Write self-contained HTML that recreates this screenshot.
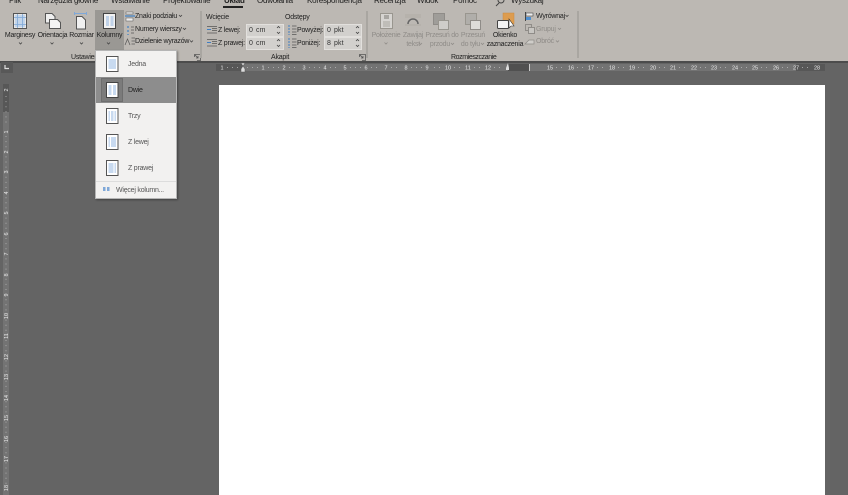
<!DOCTYPE html>
<html lang="pl"><head><meta charset="utf-8"><style>
html,body{margin:0;padding:0;background:#646464;width:848px;height:495px;overflow:hidden}
#r{position:relative;width:848px;height:495px;overflow:hidden;background:#646464;font-family:"Liberation Sans",sans-serif;font-size:7px;letter-spacing:-.22px;color:#222;filter:blur(.25px)}
#r div{position:absolute;white-space:nowrap}
.t{line-height:10px}
.c{text-align:center}
.g{color:#8f8c88}
svg{position:absolute;overflow:visible}
.sp{background:#d2d0cd;border:1px solid #e2e0dd;box-sizing:border-box;height:13px;line-height:11px;padding-left:2px;color:#333;letter-spacing:.1px;word-spacing:1px}
.ch{fill:none;stroke:#444;stroke-width:.8}
.chg{fill:none;stroke:#8f8c88;stroke-width:.8}
.ln{stroke:#6f9fd8;stroke-width:.85}
</style></head><body><div id="r">
<div style="left:0;top:0;width:848px;height:62px;background:#bcb8b3"></div>
<div style="left:0;top:61px;width:848px;height:2px;background:#4c4c4c"></div>

<!-- tabs -->
<div class="t" style="left:9px;top:-4px;font-size:8px">Plik</div>
<div class="t" style="left:38px;top:-4px;font-size:8px">Narzędzia główne</div>
<div class="t" style="left:111px;top:-4px;font-size:8px">Wstawianie</div>
<div class="t" style="left:163px;top:-4px;font-size:8px">Projektowanie</div>
<div class="t" style="left:224px;top:-4px;font-size:8px;font-weight:bold;color:#222">Układ</div>
<div style="left:223px;top:6px;width:20px;height:2px;background:#222"></div>
<div class="t" style="left:257px;top:-4px;font-size:8px">Odwołania</div>
<div class="t" style="left:307px;top:-4px;font-size:8px">Korespondencja</div>
<div class="t" style="left:374px;top:-4px;font-size:8px">Recenzja</div>
<div class="t" style="left:417px;top:-4px;font-size:8px">Widok</div>
<div class="t" style="left:453px;top:-4px;font-size:8px">Pomoc</div>
<svg style="left:495px;top:0" width="12" height="7"><circle cx="6" cy="0" r="3" fill="none" stroke="#444"/><path d="M4 3L1 6" stroke="#444"/></svg>
<div class="t" style="left:511px;top:-4px;font-size:8px">Wyszukaj</div>

<!-- Kolumny hover -->
<div style="left:95px;top:10px;width:29px;height:40px;background:#9a9894"></div>

<!-- big icons -->
<svg style="left:13px;top:13px" width="15" height="16"><rect x=".5" y=".5" width="13" height="15" fill="#e8e8e8" stroke="#555"/><rect x="2" y="2" width="10" height="12" fill="#c3d5ea"/><path d="M4.500 1V15M9.500 1V15M1 4.500H13M1 11.500H13" stroke="#7fa8d8" fill="none" stroke-width=".8"/></svg>
<svg style="left:45px;top:13px" width="17" height="17"><path d="M.5 .5H7L10 3.500V10H.5Z" fill="#efefef" stroke="#555"/><path d="M4.500 6.500H12.500L15.500 9.500V15.500H4.500Z" fill="#f4f4f4" stroke="#555"/></svg>
<svg style="left:74px;top:12px" width="14" height="18"><path d="M0 1.500H13M.5 0V3M12.500 0V3" stroke="#7fa8d8" fill="none"/><path d="M2.500 4.500H8L11.500 8V17H2.500Z" fill="#f0f0f0" stroke="#555"/></svg>
<svg style="left:103px;top:13px" width="14" height="17"><rect x=".5" y=".5" width="12" height="15" fill="#f2f2f2" stroke="#444"/><path class="ln" d="M3 4H6M3 6H6M3 8H6M3 10H6M3 12H6M7.500 4H10.500M7.500 6H10.500M7.500 8H10.500M7.500 10H10.500M7.500 12H10.500"/></svg>

<div class="t c" style="left:2px;top:31px;width:36px">Marginesy</div>
<div class="t c" style="left:36px;top:31px;width:33px">Orientacja</div>
<div class="t c" style="left:68px;top:31px;width:27px">Rozmiar</div>
<div class="t c" style="left:94px;top:31px;width:31px">Kolumny</div>
<svg style="left:0;top:0" width="848" height="62"><path class="ch" d="M19 42.500L20.500 44L22 42.500M50.500 42.500L52 44L53.500 42.500M80 42.500L81.500 44L83 42.500M107 42.500L108.500 44L110 42.500"/><path class="chg" d="M384.500 42.500L386 44L387.500 42.500"/>
<path class="ch" d="M179 15L180.500 16.500L182 15M183 28L184.500 29.500L186 28M190 40.500L191.500 42L193 40.500M565.500 15L567 16.500L568.500 15"/>
<path class="chg" d="M419 43L420.500 44.500L422 43M451 43L452.500 44.500L454 43M481 43L482.500 44.500L484 43M558 28L559.500 29.500L561 28M556 40.500L557.500 42L559 40.500"/></svg>

<!-- small commands -->
<svg style="left:125px;top:12px" width="10" height="9"><rect x="1" y="0" width="7" height="2" fill="#eee" stroke="#555" stroke-width=".5"/><path d="M0 4H10" stroke="#3f7fc4" stroke-width="1.200"/><rect x="1" y="6" width="7" height="3" fill="#eee" stroke="#555" stroke-width=".5"/></svg>
<svg style="left:126px;top:25px" width="9" height="10"><path d="M2 1V3M2 5V7M2 9V10" stroke="#3f7fc4" stroke-width="1.200"/><path d="M5 2H8M5 5H8M5 8H8" stroke="#555" stroke-width=".8"/></svg>
<svg style="left:125px;top:37px" width="10" height="9"><path d="M0 8L2.500 2L5 8M6.500 1H10M6.500 4H10M6.500 7H10" stroke="#555" fill="none" stroke-width=".7"/></svg>
<div class="t" style="left:135px;top:12px">Znaki podziału</div>
<div class="t" style="left:135px;top:25px">Numery wierszy</div>
<div class="t" style="left:135px;top:37px">Dzielenie wyrazów</div>
<div class="t" style="left:71px;top:53px">Ustawienia strony</div>
<svg style="left:194px;top:54px" width="7" height="7"><path d="M.5 3V.5H6.500V6.500H3M1 1L4 4M4 2V4H2" fill="none" stroke="#555" stroke-width=".8"/></svg>
<div style="left:200px;top:11px;width:2px;height:47px;background:#a9a6a1"></div>

<!-- Akapit -->
<div class="t" style="left:206px;top:13px">Wcięcie</div>
<div class="t" style="left:285px;top:13px">Odstępy</div>
<svg style="left:207px;top:26px" width="10" height="8"><path d="M0 .5H10M5 2.500H10M5 4.500H10M0 7H10" stroke="#555" stroke-width=".8"/><path d="M0 3.500H4" stroke="#3f7fc4"/></svg>
<svg style="left:207px;top:39px" width="10" height="8"><path d="M0 .5H10M5 2.500H10M5 4.500H10M0 7H10" stroke="#555" stroke-width=".8"/><path d="M0 3.500H4" stroke="#3f7fc4"/></svg>
<div class="t" style="left:218px;top:26px">Z lewej:</div>
<div class="t" style="left:218px;top:39px">Z prawej:</div>
<div class="sp" style="left:246px;top:24px;width:38px">0 cm</div>
<div class="sp" style="left:246px;top:37px;width:38px">0 cm</div>
<svg style="left:287px;top:25px" width="10" height="10"><path d="M2 0V10" stroke="#3f7fc4" stroke-dasharray="2 1"/><path d="M5 1H9.500M5 4H9.500M5 7H9.500M5 9.500H9.500" stroke="#555" stroke-width=".7"/></svg>
<svg style="left:287px;top:38px" width="10" height="10"><path d="M2 0V10" stroke="#3f7fc4" stroke-dasharray="2 1"/><path d="M5 1H9.500M5 4H9.500M5 7H9.500M5 9.500H9.500" stroke="#555" stroke-width=".7"/></svg>
<div class="t" style="left:297px;top:26px">Powyżej:</div>
<div class="t" style="left:297px;top:39px">Poniżej:</div>
<div class="sp" style="left:324px;top:24px;width:38px">0 pkt</div>
<div class="sp" style="left:324px;top:37px;width:38px">8 pkt</div>
<svg style="left:0;top:0" width="848" height="62"><path class="ch" d="M277 28L278.500 26.500L280 28M277 32L278.500 33.500L280 32M277 41L278.500 39.500L280 41M277 45L278.500 46.500L280 45M356 28L357.500 26.500L359 28M356 32L357.500 33.500L359 32M356 41L357.500 39.500L359 41M356 45L357.500 46.500L359 45"/></svg>
<div class="t" style="left:271px;top:53px">Akapit</div>
<svg style="left:359px;top:54px" width="7" height="7"><path d="M.5 3V.5H6.500V6.500H3M1 1L4 4M4 2V4H2" fill="none" stroke="#555" stroke-width=".8"/></svg>
<div style="left:366px;top:11px;width:2px;height:47px;background:#a9a6a1"></div>

<!-- Rozmieszczanie -->
<svg style="left:380px;top:13px" width="14" height="17"><rect x=".5" y=".5" width="12" height="15" fill="#d6d4d1" stroke="#99968f"/><path d="M3 9H10M3 11H10M3 13H10" stroke="#99968f" stroke-width=".8"/><rect x="4" y="2" width="5" height="4" fill="#a8a6a2"/></svg>
<svg style="left:405px;top:14px" width="16" height="13"><path d="M0 1H16M0 3H16M0 11H16" stroke="#aaa7a2" stroke-width=".7"/><path d="M3 10A5 5 0 0 1 13 10" fill="none" stroke="#666" stroke-width="1.500"/></svg>
<svg style="left:433px;top:13px" width="16" height="17"><rect x=".5" y=".5" width="11" height="11" fill="#9f9d99" stroke="#8f8c88"/><rect x="5.500" y="7.500" width="10" height="9" fill="#cfcdc9" stroke="#99968f"/></svg>
<svg style="left:465px;top:13px" width="16" height="17"><rect x=".5" y=".5" width="11" height="11" fill="#b0aeaa" stroke="#99968f"/><rect x="5.500" y="7.500" width="10" height="9" fill="#dddcd9" stroke="#8f8c88"/></svg>
<svg style="left:497px;top:13px" width="18" height="17"><rect x="6" y="0" width="11" height="11" fill="#dd9c4f" stroke="#c98a40" stroke-width=".5"/><rect x=".5" y="7.500" width="11" height="8" rx="1" fill="#f3f3f3" stroke="#444"/><path d="M12 6V15L14 13L17 13Z" fill="#fff" stroke="#333" stroke-width=".6"/></svg>
<div class="t c g" style="left:369px;top:31px;width:34px">Położenie</div>
<div class="t c g" style="left:401px;top:31px;width:24px">Zawijaj</div>
<div class="t c g" style="left:401px;top:40px;width:19px;text-align:right">tekst</div>
<div class="t c g" style="left:424px;top:31px;width:36px">Przesuń do</div>
<div class="t c g" style="left:424px;top:40px;width:26px;text-align:right">przodu</div>
<div class="t c g" style="left:458px;top:31px;width:30px">Przesuń</div>
<div class="t c g" style="left:456px;top:40px;width:24px;text-align:right">do tyłu</div>
<div class="t c" style="left:489px;top:31px;width:32px">Okienko</div>
<div class="t c" style="left:485px;top:40px;width:40px">zaznaczenia</div>
<svg style="left:525px;top:12px" width="10" height="9"><path d="M.5 0V9" stroke="#444"/><rect x="1" y="1" width="7" height="3" fill="#eee" stroke="#444" stroke-width=".6"/><rect x="1" y="5" width="5" height="3" fill="#4f8fd0"/></svg>
<svg style="left:525px;top:24px" width="10" height="10"><rect x=".5" y=".5" width="6" height="6" fill="none" stroke="#8f8c88"/><rect x="3.500" y="3.500" width="6" height="6" fill="#c8c6c2" stroke="#8f8c88"/></svg>
<svg style="left:525px;top:37px" width="10" height="8"><path d="M0 7L4 3H9V7Z" fill="#cfcdc9" stroke="#8f8c88" stroke-width=".7"/></svg>
<div class="t" style="left:536px;top:12px">Wyrównaj</div>
<div class="t g" style="left:536px;top:25px">Grupuj</div>
<div class="t g" style="left:536px;top:37px">Obróć</div>
<div class="t" style="left:451px;top:53px;letter-spacing:-.4px">Rozmieszczanie</div>
<div style="left:577px;top:11px;width:2px;height:47px;background:#a9a6a1"></div>

<!-- corner -->
<div style="left:1px;top:62px;width:12px;height:11px;background:#585858"></div>
<svg style="left:4px;top:65px" width="5" height="5"><path d="M1 0V3.500H5" fill="none" stroke="#ddd" stroke-width="1.200"/></svg>

<!-- horizontal ruler -->
<div style="left:216px;top:64px;width:27px;height:7px;background:#575757"></div>
<div style="left:243px;top:64px;width:265px;height:7px;background:#737373"></div>
<div style="left:508px;top:64px;width:22px;height:7px;background:#505050"></div>
<div style="left:530px;top:64px;width:266px;height:7px;background:#737373"></div>
<div style="left:796px;top:64px;width:29px;height:7px;background:#575757"></div>
<svg style="left:216px;top:64px;letter-spacing:0" width="609" height="7" font-family="Liberation Sans" font-size="5.500" fill="#e8e8e8" text-anchor="middle">
<text x="6" y="5.500">1</text><text x="47" y="5.500">1</text><text x="68" y="5.500">2</text><text x="88" y="5.500">3</text><text x="109" y="5.500">4</text><text x="129" y="5.500">5</text><text x="150" y="5.500">6</text><text x="170" y="5.500">7</text><text x="190" y="5.500">8</text><text x="211" y="5.500">9</text><text x="232" y="5.500">10</text><text x="252" y="5.500">11</text><text x="272" y="5.500">12</text><text x="334" y="5.500">15</text><text x="355" y="5.500">16</text><text x="375" y="5.500">17</text><text x="396" y="5.500">18</text><text x="416" y="5.500">19</text><text x="437" y="5.500">20</text><text x="457" y="5.500">21</text><text x="478" y="5.500">22</text><text x="498" y="5.500">23</text><text x="519" y="5.500">24</text><text x="539" y="5.500">25</text><text x="560" y="5.500">26</text><text x="580" y="5.500">27</text><text x="601" y="5.500">28</text>
<path d="M11 3.500H42M52 3.500H63M73 3.500H83M93 3.500H104M114 3.500H124M134 3.500H145M155 3.500H165M175 3.500H185M195 3.500H206M218 3.500H226M238 3.500H246M258 3.500H266M278 3.500H288M340 3.500H349M361 3.500H369M381 3.500H390M402 3.500H410M422 3.500H431M443 3.500H451M463 3.500H472M484 3.500H492M504 3.500H513M525 3.500H533M545 3.500H554M566 3.500H574M586 3.500H595" stroke="#bdbdbd" stroke-width=".8" stroke-dasharray="1 4"/>
</svg>
<svg style="left:240px;top:62px" width="7" height="12"><path d="M1 1H5L3 4ZM1 7L3 4L5 7V10H1Z" fill="#ddd" stroke="#555" stroke-width=".5"/></svg>
<svg style="left:505px;top:63px" width="7" height="9"><path d="M3 0L4 5V7H1V5Z" fill="#ddd"/></svg>
<div style="left:529px;top:64px;width:1px;height:7px;background:#ccc"></div>

<!-- vertical ruler -->
<div style="left:3px;top:84px;width:6px;height:411px;background:#737373"></div>
<div style="left:3px;top:84px;width:6px;height:28px;background:#575757"></div>
<svg style="left:3px;top:84px;letter-spacing:0" width="6" height="411" font-family="Liberation Sans" font-size="5.500" fill="#e8e8e8" text-anchor="middle">
<text transform="translate(5 6) rotate(-90)">2</text><text transform="translate(5 48) rotate(-90)">1</text>
<text transform="translate(5 68) rotate(-90)">2</text><text transform="translate(5 88) rotate(-90)">3</text><text transform="translate(5 109) rotate(-90)">4</text><text transform="translate(5 129) rotate(-90)">5</text><text transform="translate(5 150) rotate(-90)">6</text><text transform="translate(5 170) rotate(-90)">7</text><text transform="translate(5 191) rotate(-90)">8</text><text transform="translate(5 211) rotate(-90)">9</text><text transform="translate(5 232) rotate(-90)">10</text><text transform="translate(5 252) rotate(-90)">11</text><text transform="translate(5 273) rotate(-90)">12</text><text transform="translate(5 293) rotate(-90)">13</text><text transform="translate(5 314) rotate(-90)">14</text><text transform="translate(5 334) rotate(-90)">15</text><text transform="translate(5 355) rotate(-90)">16</text><text transform="translate(5 375) rotate(-90)">17</text><text transform="translate(5 404) rotate(-90)">18</text>
<path d="M3 12V42M3 52V400" stroke="#b8b8b8" stroke-width=".8" stroke-dasharray="1 4.100"/>
</svg>

<!-- page -->
<div style="left:219px;top:85px;width:606px;height:410px;background:#fff"></div>

<!-- dropdown -->
<div style="left:95px;top:50px;width:82px;height:149px;background:#f2f1f0;border:1px solid #b5b5b5;box-sizing:border-box;box-shadow:1px 1px 2px rgba(0,0,0,.35)"></div>
<div style="left:96px;top:77px;width:80px;height:26px;background:#8d8d8d"></div>
<div style="left:101px;top:78px;width:22px;height:24px;background:#7b7b7b;border:1px solid #6e6e6e;box-sizing:border-box"></div>
<svg style="left:106px;top:56px" width="13" height="16"><rect x=".5" y=".5" width="11.500" height="15" fill="#fff" stroke="#555"/><path class="ln" d="M2.500 4H10M2.500 6H10M2.500 8H10M2.500 10H10M2.500 12H10"/></svg>
<svg style="left:106px;top:82px" width="13" height="16"><rect x=".5" y=".5" width="11.500" height="15" fill="#fff" stroke="#444"/><path class="ln" d="M2.500 4H5.500M2.500 6H5.500M2.500 8H5.500M2.500 10H5.500M2.500 12H5.500M7 4H10M7 6H10M7 8H10M7 10H10M7 12H10"/></svg>
<svg style="left:106px;top:108px" width="13" height="16"><rect x=".5" y=".5" width="11.500" height="15" fill="#fff" stroke="#555"/><path class="ln" d="M2.500 4H4M2.500 6H4M2.500 8H4M2.500 10H4M2.500 12H4M5 4H7.500M5 6H7.500M5 8H7.500M5 10H7.500M5 12H7.500M8.500 4H10M8.500 6H10M8.500 8H10M8.500 10H10M8.500 12H10"/></svg>
<svg style="left:106px;top:134px" width="13" height="16"><rect x=".5" y=".5" width="11.500" height="15" fill="#fff" stroke="#555"/><path class="ln" d="M2.500 4H4M2.500 6H4M2.500 8H4M2.500 10H4M2.500 12H4M5 4H10M5 6H10M5 8H10M5 10H10M5 12H10"/></svg>
<svg style="left:106px;top:160px" width="13" height="16"><rect x=".5" y=".5" width="11.500" height="15" fill="#fff" stroke="#555"/><path class="ln" d="M2.500 4H7.500M2.500 6H7.500M2.500 8H7.500M2.500 10H7.500M2.500 12H7.500M8.500 4H10M8.500 6H10M8.500 8H10M8.500 10H10M8.500 12H10"/></svg>
<div class="t" style="left:128px;top:60px;color:#555">Jedna</div>
<div class="t" style="left:128px;top:86px;color:#222">Dwie</div>
<div class="t" style="left:128px;top:112px;color:#555">Trzy</div>
<div class="t" style="left:128px;top:138px;color:#555">Z lewej</div>
<div class="t" style="left:128px;top:164px;color:#555">Z prawej</div>
<div style="left:96px;top:181px;width:80px;height:1px;background:#dcdcdc"></div>
<svg style="left:103px;top:187px" width="7" height="5"><rect x="0" y="0" width="2.500" height="4" fill="#7fa8d8"/><rect x="4" y="0" width="2.500" height="4" fill="#7fa8d8"/></svg>
<div class="t" style="left:116px;top:186px;color:#555">Więcej kolumn...</div>
</div></body></html>
